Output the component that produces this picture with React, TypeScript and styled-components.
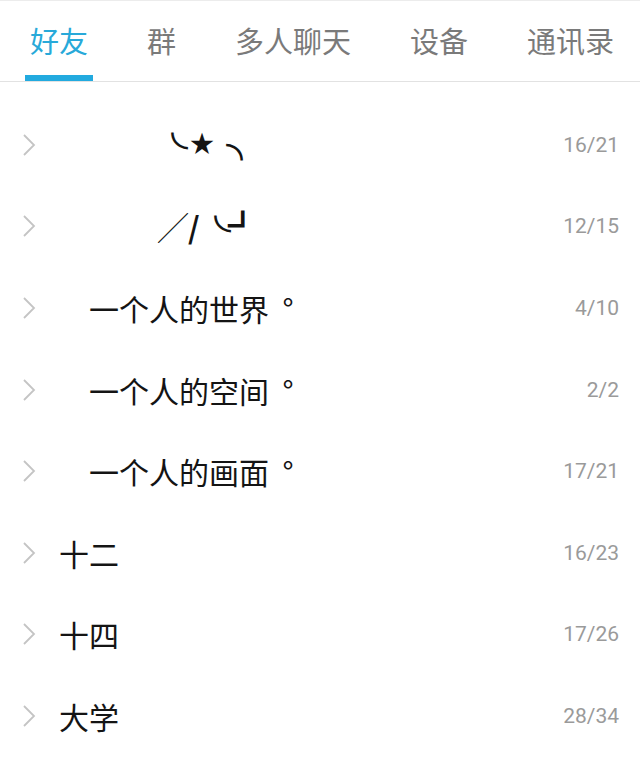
import React from 'react';
import styled, { createGlobalStyle } from 'styled-components';

const GlobalStyle = createGlobalStyle`
  html, body {
    margin: 0;
    padding: 0;
    background: #ffffff;
  }
  body {
    font-family: 'Noto Sans CJK SC', 'Noto Sans', sans-serif;
  }
`;

const Page = styled.div`
  width: 640px;
  min-height: 761px;
  background: #ffffff;
`;

// 상단 탭
const TabBar = styled.div`
  display: flex;
  align-items: stretch;
  gap: 59px;
  height: 82px;
  box-sizing: border-box;
  padding-left: 30px;
  border-top: 1px solid #ececec;
  border-bottom: 1px solid #e2e2e2;
`;

const Tab = styled.div<{ active?: boolean }>`
  position: relative;
  display: flex;
  align-items: center;
  padding-bottom: 2px;
  font-size: 29px;
  color: ${({ active }) => (active ? '#28a9d9' : '#7a7a7a')};
  white-space: nowrap;
`;

const Indicator = styled.span`
  position: absolute;
  left: -5px;
  right: -5px;
  bottom: 0;
  height: 6px;
  background: #22aadf;
`;

// 그룹 목록
const List = styled.div`
  display: flex;
  flex-direction: column;
  padding-top: 22px;
`;

const Row = styled.div`
  display: flex;
  align-items: center;
  height: 81.6px;
  padding: 0 21px 0 22px;
`;

const Chevron = styled.svg`
  flex: none;
  width: 14px;
  height: 24px;
  margin-right: 23px;
`;

const Name = styled.span<{ indent?: number }>`
  flex: 1;
  padding-left: ${({ indent }) => indent || 0}px;
  font-size: 30px;
  line-height: 40px;
  color: #141414;
  white-space: pre;
`;

// 특수 기호 글자 (크기와 기준선 조정)
const Sym = styled.span<{ size?: number; rise?: number; gap?: number; bold?: boolean }>`
  font-size: ${({ size }) => size || 30}px;
  font-weight: ${({ bold }) => (bold ? 700 : 400)};
  vertical-align: ${({ rise }) => rise || 0}px;
  margin-left: ${({ gap }) => gap || 0}px;
  line-height: 0;
`;

const Count = styled.span`
  font-family: Roboto, 'Noto Sans', sans-serif;
  font-size: 21px;
  color: #9a9a9a;
`;

const tabs = ['好友', '群', '多人聊天', '设备', '通讯录'];

const groups = [
  { name: '　一个人的世界  °', count: '4/10' },
  { name: '　一个人的空间  °', count: '2/2' },
  { name: '　一个人的画面  °', count: '17/21' },
  { name: '十二', count: '16/23' },
  { name: '十四', count: '17/26' },
  { name: '大学', count: '28/34' },
];

const ChevronIcon = () => (
  <Chevron viewBox="0 0 14 24">
    <path d="M2 2 L12 12 L2 22" fill="none" stroke="#c4c4c4" strokeWidth="1.8" />
  </Chevron>
);

export default function App() {
  return (
    <Page>
      <GlobalStyle />
      <TabBar>
        {tabs.map((t, i) => (
          <Tab key={t} active={i === 0}>
            {t}
            {i === 0 && <Indicator />}
          </Tab>
        ))}
      </TabBar>
      <List>
        <Row>
          <ChevronIcon />
          <Name indent={112}>
            <Sym size={44} rise={14}>◟</Sym>
            <Sym size={24} rise={6} gap={2}>★</Sym>
            <Sym size={44} rise={-14} gap={12}>◝</Sym>
          </Name>
          <Count>16/21</Count>
        </Row>
        <Row>
          <ChevronIcon />
          <Name indent={99}>
            <Sym>╱</Sym>
            <Sym bold>/</Sym>
            <Sym size={44} rise={12} gap={14}>◟</Sym>
            <Sym bold rise={2} gap={-3}>┛</Sym>
          </Name>
          <Count>12/15</Count>
        </Row>
        {groups.map((g) => (
          <Row key={g.name}>
            <ChevronIcon />
            <Name>{g.name}</Name>
            <Count>{g.count}</Count>
          </Row>
        ))}
      </List>
    </Page>
  );
}
